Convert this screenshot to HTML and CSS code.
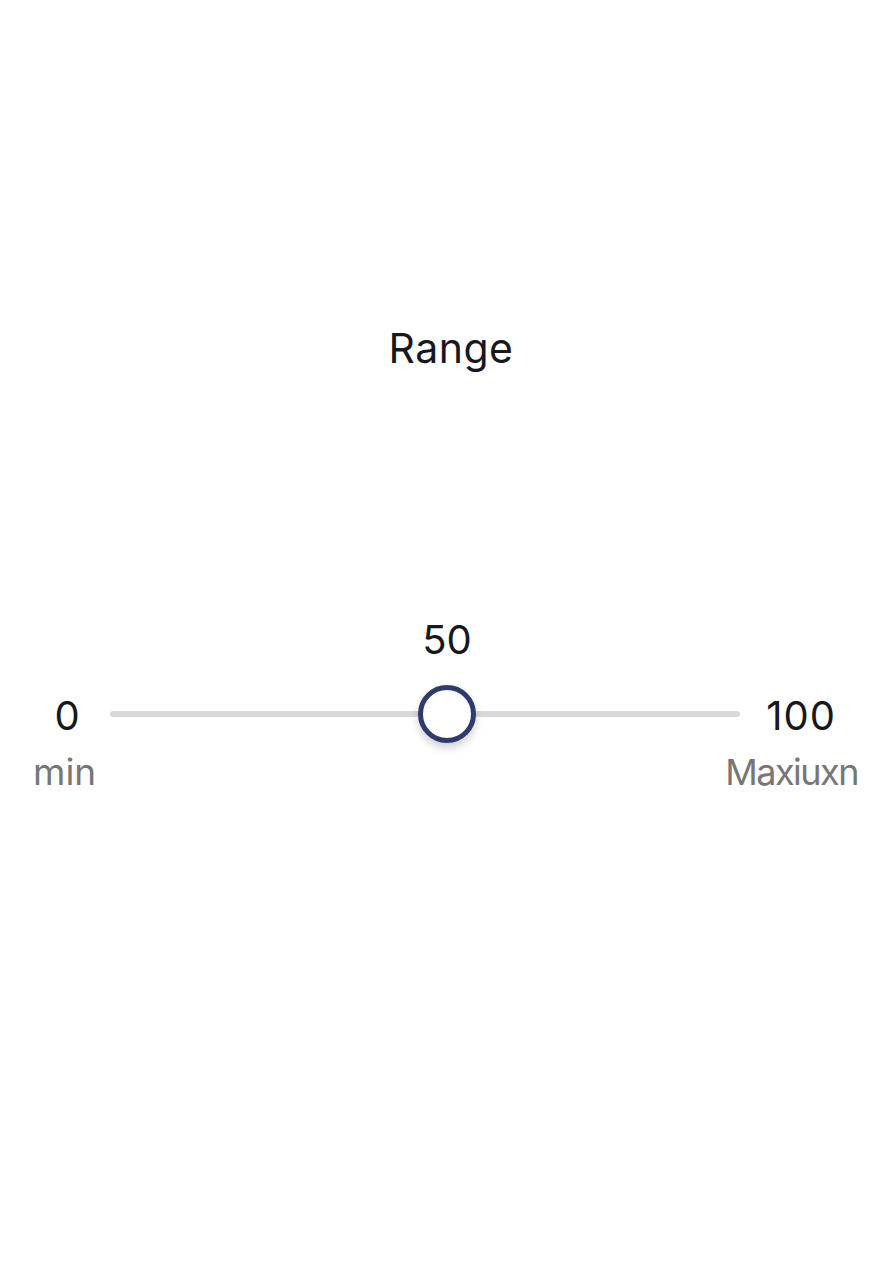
FILE: index.html
```html
<!DOCTYPE html>
<html>
<head>
<meta charset="utf-8">
<link rel="stylesheet" href="styles.css">
</head>
<body>
<main class="page">
  <h1 class="title">Range</h1>
  <section class="slider">
    <div class="value-row">
      <div class="value-track">
        <span class="value" style="left: 53.5%">50</span>
      </div>
    </div>
    <div class="track-row">
      <span class="end end-min">0</span>
      <div class="track">
        <span class="thumb" style="left: 53.5%"></span>
      </div>
      <span class="end end-max">100</span>
    </div>
    <div class="label-row">
      <span class="label label-min">min</span>
      <span class="label label-max">Maxiuxn</span>
    </div>
  </section>
</main>
</body>
</html>
```

FILE: styles.css
```css
html, body {
  margin: 0;
  padding: 0;
  background: #ffffff;
}

.page {
  font-family: Inter, Roboto, "Noto Sans", sans-serif;
  color: #17181c;
  width: 896px;
  height: 1280px;
  box-sizing: border-box;
  padding-top: 324px;
}

.title {
  margin: 0;
  font-size: 41px;
  line-height: 48px;
  font-weight: 400;
  text-align: center;
  letter-spacing: 0.5px;
  padding-left: 6px;
}

.slider {
  margin-top: 244px;
  display: flex;
  flex-direction: column;
}

.value-row {
  display: flex;
  padding-left: 110px;
}

.value-track {
  position: relative;
  width: 630px;
  height: 48px;
}

.value {
  position: absolute;
  top: 0;
  transform: translateX(-50%);
  font-size: 40px;
  line-height: 48px;
}

.track-row {
  display: flex;
  align-items: center;
  height: 60px;
  margin-top: 20px;
}

.end {
  font-size: 40px;
  line-height: 48px;
  text-align: center;
  padding-top: 4px;
}

.end-min {
  width: 80px;
  margin-left: 27px;
  margin-right: 3px;
}

.end-max {
  width: 110px;
  margin-left: 6px;
  letter-spacing: 1px;
}

.track {
  position: relative;
  width: 630px;
  height: 6px;
  border-radius: 3px;
  background: #d9d9d9;
}

.thumb {
  position: absolute;
  top: 50%;
  width: 48px;
  height: 48px;
  border: 5px solid #2f3b6c;
  border-radius: 50%;
  background: #ffffff;
  transform: translate(-50%, -50%);
  box-shadow: 0 5px 8px rgba(0, 0, 0, 0.18);
}

.label-row {
  display: flex;
  justify-content: space-between;
  padding-left: 33px;
  padding-right: 38px;
  margin-top: 6px;
}

.label {
  font-size: 37px;
  line-height: 44px;
  color: #767676;
}

.label-max {
  font-size: 36px;
  letter-spacing: -1.5px;
}
```
